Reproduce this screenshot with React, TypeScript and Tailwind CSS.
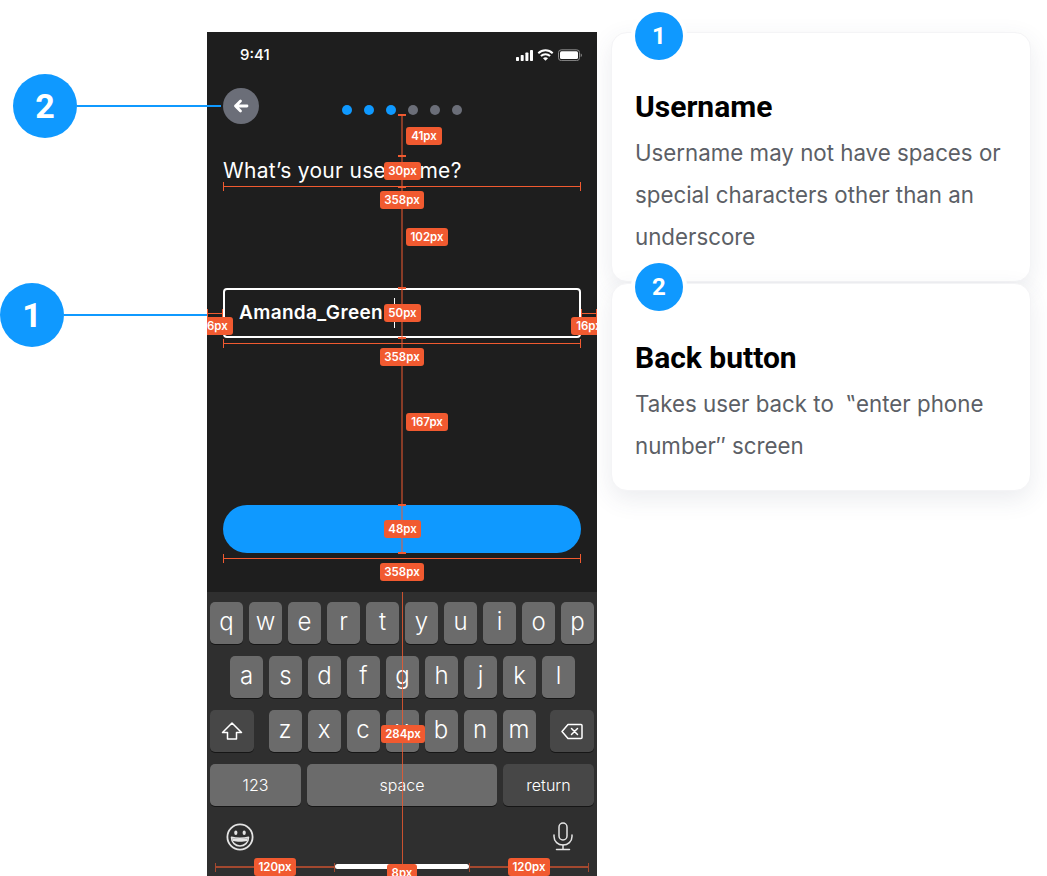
import React from "react";

const KeyBase = "flex items-center justify-center rounded-[5px] text-white shadow-[0_1px_0_#161616] h-[42px] font-['Inter',sans-serif]";

function Key({ k }: { k: string }) {
  return <div className={`${KeyBase} w-[33px] bg-[#6b6b6b] text-[24px] font-light pb-[3px]`}>{k}</div>;
}

function Row({ keys }: { keys: string }) {
  return (
    <>
      {keys.split("").map((k) => (
        <Key key={k} k={k} />
      ))}
    </>
  );
}

function Chip({ children, className }: { children: React.ReactNode; className?: string }) {
  return (
    <div className={`h-[18px] pt-[1px] flex items-center justify-center rounded-[3px] bg-[#f15a30] text-white text-[11.5px] font-semibold font-['Inter',sans-serif] ${className ?? ""}`}>
      {children}
    </div>
  );
}

function Label({ children, className }: { children: React.ReactNode; className: string }) {
  return <Chip className={`absolute ${className}`}>{children}</Chip>;
}

function HLine({ className, thick }: { className: string; thick?: boolean }) {
  return (
    <div className={`h-[9px] border-x border-[#f15a30] flex items-center ${className}`}>
      <div className={`w-full bg-[#f15a30] ${thick ? "h-[2px]" : "h-px"}`} />
    </div>
  );
}

function Span358({ className }: { className: string }) {
  return (
    <div className={`absolute left-[16px] w-[358px] flex flex-col items-center ${className}`}>
      <HLine className="w-full" />
      <Chip className="w-[44px]">358px</Chip>
    </div>
  );
}

function Tick({ className }: { className: string }) {
  return <div className={`absolute left-[191px] w-[8px] h-[2px] bg-[#f15a30] ${className}`} />;
}

function Overlay() {
  return (
    <div className="absolute inset-0">
      <div className="absolute left-[194px] top-[83px] h-[438px] w-[2px] bg-[#f15a30]/50" />
      <div className="absolute left-[195px] top-[560px] h-[284px] w-px bg-[#f15a30]/80" />
      <Tick className="top-[82px]" />
      <Tick className="top-[123px]" />
      <Tick className="top-[154px]" />
      <Tick className="top-[255px]" />
      <Tick className="top-[305px]" />
      <Tick className="top-[472px]" />
      <Tick className="top-[520px]" />

      <Label className="left-[199px] top-[95px] w-[36px]">41px</Label>
      <Label className="left-[177px] top-[130px] w-[37px]">30px</Label>
      <Span358 className="top-[150px]" />
      <Label className="left-[199px] top-[196px] w-[42px]">102px</Label>

      <Label className="left-[177px] top-[272px] w-[37px]">50px</Label>
      <div className="absolute left-0 top-[277px] w-full flex justify-between">
        <HLine className="w-[16px]" />
        <HLine className="w-[16px]" />
      </div>
      <Label className="left-[-10px] top-[285px] w-[36px]">16px</Label>
      <Label className="left-[364px] top-[285px] w-[36px]">16px</Label>
      <Span358 className="top-[307px]" />
      <Label className="left-[199px] top-[381px] w-[42px]">167px</Label>

      <Label className="left-[177px] top-[488px] w-[37px]">48px</Label>
      <Span358 className="top-[522px]" />

      <Label className="left-[174px] top-[693px] w-[44px]">284px</Label>

      <div className="absolute left-[8px] top-[826px] w-[374px] flex justify-between">
        {[0, 1].map((i) => (
          <div key={i} className="relative w-[120px] h-[18px] flex items-center justify-center">
            <HLine thick className="absolute inset-x-0 opacity-60" />
            <Chip className="relative w-[42px]">120px</Chip>
          </div>
        ))}
      </div>
      <Label className="left-[180px] top-[832px] w-[30px]">8px</Label>
    </div>
  );
}

function Phone() {
  return (
    <div className="relative w-[390px] h-[844px] bg-[#1e1e1e] overflow-hidden flex flex-col">
      <div className="h-[44px] flex items-center justify-between pl-[33px] pr-[15px] pt-[2px]">
        <span className="text-white text-[15px] font-medium font-['Inter',sans-serif]">9:41</span>
        <svg width="66" height="12" viewBox="0 0 66 12" fill="none">
          <rect x="0" y="8" width="3" height="4" rx="0.7" fill="#fff" />
          <rect x="4.7" y="6" width="3" height="6" rx="0.7" fill="#fff" />
          <rect x="9.4" y="3.5" width="3" height="8.5" rx="0.7" fill="#fff" />
          <rect x="14" y="1" width="3" height="11" rx="0.7" fill="#fff" />
          <path d="M22.3 4.2C26.4 .3 32.6 .3 36.7 4.2" stroke="#fff" strokeWidth="2" />
          <path d="M24.9 7C27.5 4.6 31.5 4.6 34.1 7" stroke="#fff" strokeWidth="2" />
          <path d="M29.5 11.7L27 9.2C28.4 8 30.6 8 32 9.2Z" fill="#fff" />
          <rect x="42.5" y=".8" width="21" height="10.8" rx="2.8" stroke="#8b8b8b" />
          <rect x="44" y="2.3" width="18" height="7.8" rx="1.5" fill="#fff" />
          <path d="M64.7 4.4C65.5 4.7 65.9 5.4 65.9 6.2C65.9 7 65.5 7.7 64.7 8Z" fill="#8b8b8b" />
        </svg>
      </div>

      <div className="h-[36px] mt-[12px] ml-[16px] flex items-start">
        <div className="w-[36px] h-[36px] rounded-full bg-[#6b6e78] flex items-center justify-center">
          <svg width="16" height="14" viewBox="0 0 16 14" fill="none" stroke="#fff" strokeWidth="2.8" strokeLinecap="round" strokeLinejoin="round">
            <path d="M14 7H2.5M7.5 2L2.5 7L7.5 12" />
          </svg>
        </div>
        <div className="ml-[83px] mt-[17px] flex gap-[12px]">
          <span className="w-[10px] h-[10px] rounded-full bg-[#0f99ff]" />
          <span className="w-[10px] h-[10px] rounded-full bg-[#0f99ff]" />
          <span className="w-[10px] h-[10px] rounded-full bg-[#0f99ff]" />
          <span className="w-[10px] h-[10px] rounded-full bg-[#6b6e78]" />
          <span className="w-[10px] h-[10px] rounded-full bg-[#6b6e78]" />
          <span className="w-[10px] h-[10px] rounded-full bg-[#6b6e78]" />
        </div>
      </div>

      <h1 className="mt-[32px] mx-[16px] h-[30px] leading-[30px] text-white text-[21px] tracking-[0.3px] font-['Inter',sans-serif]">What’s your username?</h1>

      <div className="mt-[102px] mx-[16px] h-[50px] rounded-[4px] border-2 border-white flex items-center pl-[14px]">
        <span className="w-[155px] pt-[1px] text-white text-[19px] tracking-[0.35px] font-semibold font-['Inter',sans-serif]">Amanda_Green</span>
        <span className="w-px h-[30px] bg-white" />
      </div>

      <div className="mt-[167px] mx-[16px] h-[48px] rounded-full bg-[#0f99ff]" />

      <div className="mt-[39px] flex-1 bg-[#2f2f2f] flex flex-col px-[3px] pt-[10px]">
        <div className="flex gap-[6px]">
          <Row keys="qwertyuiop" />
        </div>
        <div className="flex gap-[6px] mt-[12px] pl-[20px]">
          <Row keys="asdfghjkl" />
        </div>
        <div className="flex justify-between mt-[12px]">
          <div className={`${KeyBase} w-[44px] bg-[#474747]`}>
            <svg width="22" height="20" viewBox="0 0 22 20" fill="none" stroke="#fff" strokeWidth="1.5" strokeLinejoin="round">
              <path d="M11 2L1.5 11.5H6.5V18H15.5V11.5H20.5Z" />
            </svg>
          </div>
          <div className="flex gap-[6px]">
            <Row keys="zxcvbnm" />
          </div>
          <div className={`${KeyBase} w-[44px] bg-[#474747]`}>
            <svg width="22" height="17" viewBox="0 0 22 17" fill="none" stroke="#fff" strokeWidth="1.5" strokeLinejoin="round" strokeLinecap="round">
              <path d="M7 1.5H20C20.6 1.5 21 1.9 21 2.5V14.5C21 15.1 20.6 15.5 20 15.5H7L1 8.5Z" />
              <path d="M10.5 5.5L16.5 11.5M16.5 5.5L10.5 11.5" />
            </svg>
          </div>
        </div>
        <div className="flex gap-[6px] mt-[12px]">
          <div className={`${KeyBase} w-[91px] bg-[#6b6b6b] text-[16px] font-light`}>123</div>
          <div className={`${KeyBase} w-[190px] bg-[#6b6b6b] text-[16px] font-light`}>space</div>
          <div className={`${KeyBase} w-[91px] bg-[#474747] text-[16px] font-light`}>return</div>
        </div>
        <div className="flex items-center justify-between mt-[16px] pl-[16px] pr-[21px]">
          <svg width="28" height="28" viewBox="0 0 28 28" fill="none" stroke="#e4e4e4" strokeWidth="1.8">
            <circle cx="14" cy="14" r="12.6" />
            <ellipse cx="9.8" cy="9.8" rx="1.6" ry="2.2" fill="#e4e4e4" stroke="none" />
            <ellipse cx="18.2" cy="9.8" rx="1.6" ry="2.2" fill="#e4e4e4" stroke="none" />
            <path d="M5.5 14.2C10 15.6 18 15.6 22.5 14.2C22.5 19.8 18.5 23 14 23C9.5 23 5.5 19.8 5.5 14.2Z" strokeLinejoin="round" strokeWidth="1.6" />
            <path d="M6.3 15C10 16.2 18 16.2 21.7 15L21 18C17 19 11 19 7 18Z" fill="#e4e4e4" stroke="none" />
          </svg>
          <svg width="20" height="29" viewBox="0 0 20 29" fill="none" stroke="#e4e4e4" strokeWidth="1.5" strokeLinecap="round">
            <rect x="6" y="1" width="8" height="17" rx="4" />
            <path d="M1 13V14.5C1 19.5 5 23 10 23C15 23 19 19.5 19 14.5V13" />
            <path d="M10 23V27.5M3.5 27.5H16.5" />
          </svg>
        </div>
      </div>

      <div className="absolute left-[128px] top-[832px] w-[134px] h-[5px] rounded-full bg-white" />
      <Overlay />
    </div>
  );
}

function Note({ n, title, className, lines }: { n: string; title: string; className: string; lines: string[] }) {
  return (
    <div className={`relative w-[420px] rounded-[16px] bg-white border border-[#f4f4f6] shadow-[0_8px_24px_rgba(60,70,100,0.10)] pl-[23px] pt-[53px] pb-[23px] ${className}`}>
      <div className="absolute left-[23px] top-[-21px] w-[48px] h-[48px] rounded-full bg-[#0f99ff] ring-4 ring-white flex items-center justify-center text-white text-[24px] font-bold font-['Roboto',sans-serif]">
        {n}
      </div>
      <h2 className="h-[42px] leading-[42px] text-black text-[30px] font-bold font-['Roboto',sans-serif]">{title}</h2>
      <div className="mt-[4px] text-[#5c5f66] text-[22.3px] leading-[42px] font-['Inter',sans-serif]">
        {lines.map((l) => (
          <div key={l} className="whitespace-pre">{l}</div>
        ))}
      </div>
    </div>
  );
}

function Callout({ n, className, lineClass }: { n: string; className: string; lineClass: string }) {
  return (
    <div className={`flex items-center ${className}`}>
      <div className="w-[64px] h-[64px] shrink-0 rounded-full bg-[#0f99ff] flex items-center justify-center text-white text-[34px] font-bold font-['Roboto',sans-serif]">{n}</div>
      <div className={`h-[2px] shrink-0 bg-[#0f99ff] ${lineClass}`} />
    </div>
  );
}

export default function App() {
  return (
    <div className="w-[1047px] h-[876px] bg-white overflow-hidden flex">
      <div className="w-[207px] shrink-0 relative z-10 flex flex-col">
        <Callout n="2" className="mt-[74px] ml-[13px]" lineClass="w-[144px]" />
        <Callout n="1" className="mt-[145px]" lineClass="w-[143px]" />
      </div>
      <div className="mt-[32px] shrink-0">
        <Phone />
      </div>
      <div className="ml-[14px] mt-[32px] flex flex-col gap-[1px]">
        <Note n="1" title="Username" className="h-[250px]" lines={["Username may not have spaces or", "special characters other than an", "underscore"]} />
        <Note n="2" title="Back button" className="h-[208px]" lines={["Takes user back to  ‟enter phone", "number″ screen"]} />
      </div>
    </div>
  );
}
